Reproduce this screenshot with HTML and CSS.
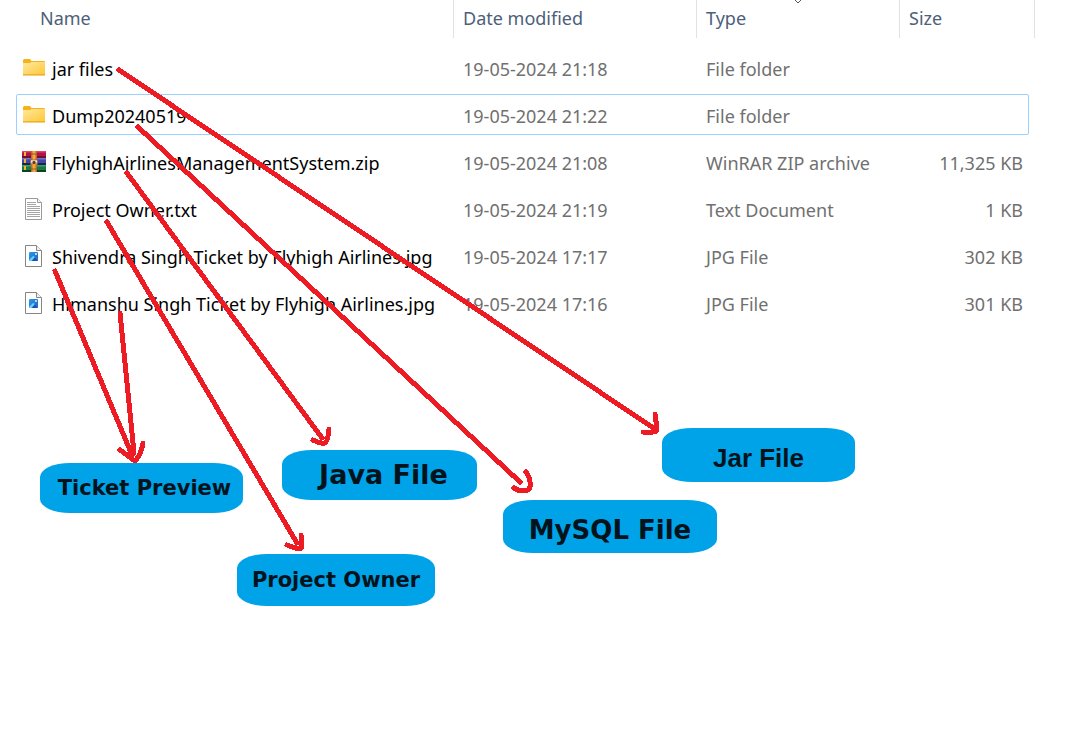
FILE: index.html
```html
<!DOCTYPE html>
<html lang="en">
<head>
<meta charset="utf-8">
<title>Project files</title>
<link rel="stylesheet" href="styles.css">
</head>
<body>
<svg class="defs" aria-hidden="true">
  <defs>
    <linearGradient id="folderFill" x1="0" y1="0" x2="1" y2="1">
      <stop offset="0" stop-color="#ffe8a0"/><stop offset="1" stop-color="#ffc937"/>
    </linearGradient>
    <linearGradient id="photoFill" x1="0" y1="0" x2="1" y2="1">
      <stop offset="0" stop-color="#2a9be8"/><stop offset="1" stop-color="#1a62c4"/>
    </linearGradient>
    <symbol id="folder" viewBox="0 0 24 24">
      <path d="M1 4.500Q1 3 2.500 3H8L9.500 5H22Q23 5 23 6V19H1Z" fill="#f5b21b"/>
      <path d="M1 7H8L9.500 6H23V18.500H1Z" fill="url(#folderFill)"/>
      <path d="M1 19H23" stroke="#e5a11a" stroke-width="1"/>
    </symbol>
    <symbol id="archive" viewBox="0 0 24 24">
      <path d="M0 1H24V8H0Z" fill="#b01440"/><path d="M0 1H24V2.500H0Z" fill="#d8456b"/><path d="M0 6H24V8H0Z" fill="#711032"/>
      <path d="M0 8H24V15H0Z" fill="#4646a8"/><path d="M0 8H24V9.500H0Z" fill="#7472cc"/><path d="M0 13H24V15H0Z" fill="#242057"/>
      <path d="M0 15H24V22H0Z" fill="#187c42"/><path d="M0 15H24V16.500H0Z" fill="#38a566"/><path d="M0 20H24V22H0Z" fill="#0b4422"/>
      <path d="M2 2H4V6H2ZM2 9H4V13H2ZM2 16H4V20H2Z" fill="#f0b928"/>
      <path d="M9 1H15V22H9Z" fill="#c56a20"/><path d="M10.500 1H13.500V22H10.500Z" fill="#f1a64a"/>
      <path d="M9 4H15M9 19H15" stroke="#8e4a18" stroke-width="0.800"/>
      <path d="M8.500 10H15.500V14Q15 15.500 14 13V12H10V13Q9 15.500 8.500 14Z" fill="#efe9dd" stroke="#7a4a20" stroke-width="0.500"/>
      <path d="M11 11H13V14H11Z" fill="#6b3d16"/>
    </symbol>
    <symbol id="text" viewBox="0 0 24 24">
      <path d="M3.500 1.500H15.500L19.500 5.500V22.500H3.500Z" fill="#fff" stroke="#9a9a9a"/>
      <path d="M15.500 1.500V5.500H19.500" fill="#f2f2f2" stroke="#9a9a9a"/>
      <path d="M5 5.500H14M5 7.500H14M5 9.500H18M5 11.500H18M5 13.500H18M5 15.500H18M5 17.500H18M5 19.500H18" stroke="#a5a5a5"/>
    </symbol>
    <symbol id="photo" viewBox="0 0 24 24">
      <path d="M3.500 1.500H14.500L19.500 6.500V22.500H3.500Z" fill="#fff" stroke="#858585"/>
      <path d="M14.500 1.500V6.500H19.500" fill="#f2f2f2" stroke="#858585"/>
      <rect x="7" y="8" width="9" height="9" rx="1" fill="url(#photoFill)"/>
      <path d="M7 16L10.500 12.500Q11.500 11.500 12.500 12.500L16 16Q16 17 15 17H8Q7 17 7 16Z" fill="#6bd0ff"/>
      <path d="M9.500 17L12.500 13.500V12.500L16 16Q16 17 15 17Z" fill="#1656ae"/>
      <circle cx="14" cy="10" r="1" fill="#e5f7ff"/>
    </symbol>
  </defs>
</svg>

<main class="explorer">
  <table class="files">
    <colgroup><col><col class="col-date"><col class="col-type"><col class="col-size"></colgroup>
    <thead>
      <tr>
        <th scope="col"><button type="button" class="sort sort-name">Name</button></th>
        <th scope="col"><button type="button" class="sort">Date modified</button></th>
        <th scope="col"><button type="button" class="sort">Type
          <svg class="chevron" width="10" height="5" viewBox="0 0 10 5" aria-hidden="true"><path d="M1 -1L5 3L9 -1" fill="none" stroke="#555"/></svg></button></th>
        <th scope="col"><button type="button" class="sort">Size</button></th>
      </tr>
    </thead>
    <tbody>
      <tr><td><span class="file"><svg class="icon" aria-hidden="true"><use href="#folder"/></svg>jar files</span></td><td>19-05-2024 21:18</td><td>File folder</td><td></td></tr>
      <tr class="focused"><td><span class="file"><svg class="icon" aria-hidden="true"><use href="#folder"/></svg>Dump20240519</span></td><td>19-05-2024 21:22</td><td>File folder</td><td></td></tr>
      <tr><td><span class="file"><svg class="icon" aria-hidden="true"><use href="#archive"/></svg>FlyhighAirlinesManagementSystem.zip</span></td><td>19-05-2024 21:08</td><td>WinRAR ZIP archive</td><td>11,325 KB</td></tr>
      <tr><td><span class="file"><svg class="icon" aria-hidden="true"><use href="#text"/></svg>Project Owner.txt</span></td><td>19-05-2024 21:19</td><td>Text Document</td><td>1 KB</td></tr>
      <tr><td><span class="file"><svg class="icon" aria-hidden="true"><use href="#photo"/></svg>Shivendra Singh Ticket by Flyhigh Airlines.jpg</span></td><td>19-05-2024 17:17</td><td>JPG File</td><td>302 KB</td></tr>
      <tr><td><span class="file"><svg class="icon" aria-hidden="true"><use href="#photo"/></svg>Himanshu Singh Ticket by Flyhigh Airlines.jpg</span></td><td>19-05-2024 17:16</td><td>JPG File</td><td>301 KB</td></tr>
    </tbody>
  </table>
</main>

<div class="notes">
  <div class="note note-ticket">Ticket Preview</div>
  <div class="note note-java">Java File</div>
  <div class="note note-owner">Project Owner</div>
  <div class="note note-mysql">MySQL File</div>
  <div class="note note-jar">Jar File</div>
  <svg class="arrows" width="1092" height="743" viewBox="0 0 1092 743" aria-hidden="true">
    <path d="M119 70L652 427M655 414L657 429Q657 432 653 432H643"/>
    <path d="M138 127L520 482M526 472Q531 479 530 487Q529 491 524 491Q518 491 514 488"/>
    <path d="M127 173L322 438M329 429Q328 441 325 443Q321 444 313 440"/>
    <path d="M107 222L297 543M301 535L302 545Q302 549 298 549L287 545"/>
    <path d="M55 271L132 455M120 313L134 453M120 450L135 461Q141 455 143 443"/>
  </svg>
</div>
</body>
</html>
```
FILE: styles.css
```css
body {
  margin: 0;
  background: #fff;
  color: #707070;
  font-family: "Noto Sans", "Open Sans", sans-serif;
  font-size: 18px;
  line-height: 24px;
}

.defs {
  position: absolute;
  width: 0;
  height: 0;
}

.explorer {
  padding: 0 57px 0 16px;
}

.files {
  width: 100%;
  table-layout: fixed;
  border-collapse: collapse;
}

.col-date { width: 243px; }
.col-type { width: 203px; }
.col-size { width: 135px; }

.files th {
  height: 44px;
  padding: 0;
  vertical-align: top;
}

.sort {
  position: relative;
  display: block;
  width: 100%;
  height: 38px;
  padding: 0 0 2px 9px;
  border: 0;
  border-right: 1px solid #e2e2e2;
  background: none;
  color: #4c607a;
  font: inherit;
  font-weight: 400;
  text-align: left;
}

.sort-name { padding-left: 24px; }

.chevron {
  position: absolute;
  top: 0;
  left: calc(50% - 5px);
}

.files td {
  height: 47px;
  padding: 2px 0 0 9px;
  box-sizing: border-box;
  white-space: nowrap;
}

.files td:first-child { padding-left: 6px; }

.files td:last-child {
  padding-right: 12px;
  text-align: right;
}

.focused { position: relative; }

.focused td:last-child::after {
  content: "";
  position: absolute;
  inset: 3px 6px 3px 0;
  border: 1px solid #99d1ff;
  border-radius: 2px;
}

.file {
  display: flex;
  align-items: center;
  gap: 6px;
  color: #000;
}

.icon {
  flex: none;
  width: 24px;
  height: 24px;
  margin-bottom: 2px;
}

.notes {
  position: absolute;
  top: 0;
  left: 0;
}

.arrows {
  position: absolute;
  top: 0;
  left: 0;
  fill: none;
  stroke: #ed1c24;
  stroke-width: 5px;
  stroke-linecap: round;
  stroke-linejoin: round;
  shape-rendering: crispEdges;
}

.note {
  position: absolute;
  display: flex;
  align-items: center;
  justify-content: center;
  box-sizing: border-box;
  border-radius: 30px / 14px;
  background: #00a2e8;
  color: #02131c;
  font-family: "DejaVu Sans", sans-serif;
  font-size: 26px;
  font-weight: 700;
  white-space: nowrap;
}

.note-ticket {
  top: 463px;
  left: 40px;
  width: 203px;
  height: 50px;
  padding-left: 6px;
  font-size: 21px;
}

.note-java {
  top: 450px;
  left: 282px;
  width: 195px;
  height: 50px;
  padding-left: 8px;
  font-size: 27px;
}

.note-owner {
  top: 554px;
  left: 237px;
  width: 198px;
  height: 52px;
  font-size: 21px;
}

.note-mysql {
  top: 500px;
  left: 503px;
  width: 214px;
  height: 53px;
  padding-top: 6px;
}

.note-jar {
  top: 428px;
  left: 662px;
  width: 193px;
  height: 54px;
  padding-top: 6px;
  font-family: "Liberation Sans", sans-serif;
}
```
